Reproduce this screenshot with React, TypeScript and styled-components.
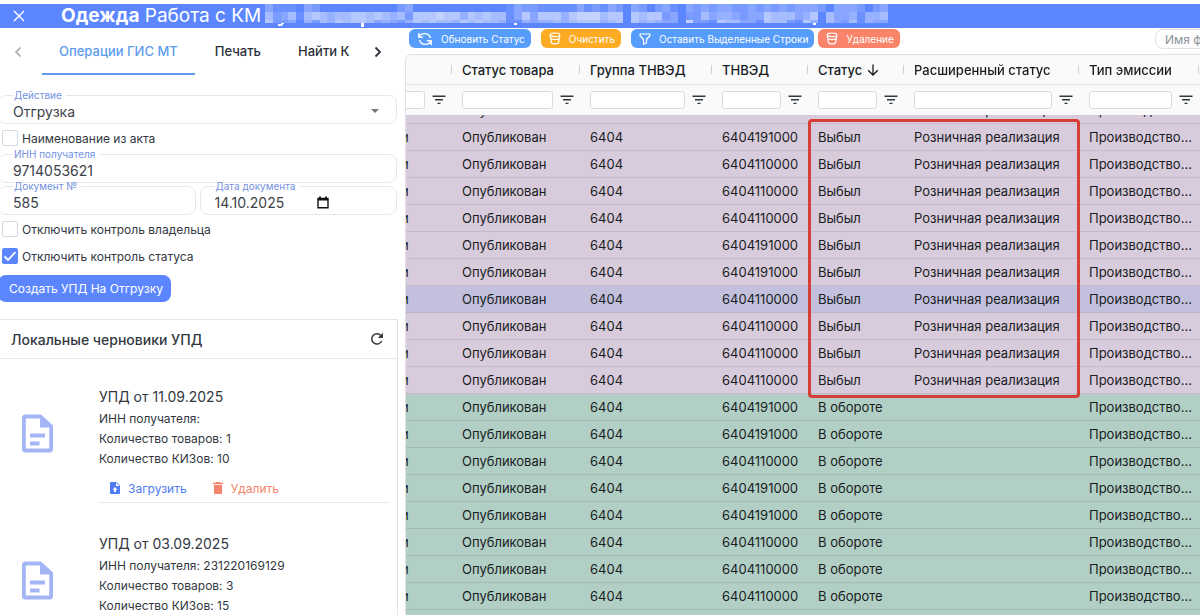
import React, { useLayoutEffect, useRef } from 'react';
import styled, { createGlobalStyle } from 'styled-components';

const GlobalStyle = createGlobalStyle`
  *, *::before, *::after { box-sizing: border-box; }
  body {
    margin: 0;
    background: #fff;
    color: #33383f;
    font-family: Inter, "Liberation Sans", sans-serif;
    font-size: 13px;
  }
  button, input, select { font-family: inherit; color: inherit; }
`;

const Page = styled.div`
  display: flex;
  flex-direction: column;
  height: 100vh;
  padding-top: 4px;
  overflow: hidden;
`;

const TopBar = styled.header`
  display: flex;
  flex: none;
  align-items: center;
  height: 24px;
  padding-left: 12px;
  background: #5c86ff;
  color: #fff;
`;

const IconButton = styled.button`
  display: flex;
  flex: none;
  padding: 0;
  border: 0;
  background: none;
  cursor: pointer;
`;

const Title = styled.h1`
  flex: none;
  margin: 0 4px 0 35px;
  font-size: 19px;
  line-height: 24px;
  font-weight: 400;
  white-space: pre;
`;

const Body = styled.div`
  display: flex;
  flex: 1;
  min-height: 0;
`;

const Side = styled.aside`
  display: flex;
  flex: none;
  flex-direction: column;
  width: 398px;
  overflow: hidden;
`;

const Tabs = styled.nav`
  display: flex;
  flex: none;
  align-items: center;
  height: 47px;
  padding: 0 14px 0 12px;
`;

const TabList = styled.div`
  display: flex;
  flex: 1;
  gap: 3px;
  margin: 0 12px 0 18px;
  overflow: hidden;
`;

const Tab = styled.button<{ $active?: boolean }>`
  height: 47px;
  padding: 0 17px;
  border: 0;
  border-bottom: 2px solid ${(p) => (p.$active ? '#5d9cec' : 'transparent')};
  background: none;
  color: ${(p) => (p.$active ? '#5d9cec' : '#2c3138')};
  font-size: 13px;
  font-weight: 500;
  white-space: nowrap;
`;

const Form = styled.form`
  display: flex;
  flex: none;
  flex-direction: column;
  gap: 1px;
  margin-left: -2px;
  padding: 14px 1px 0 0;
`;

const FieldRow = styled.div<{ $tight?: boolean }>`
  display: flex;
  gap: 4px;
  margin-top: ${(p) => (p.$tight ? -4 : 0)}px;
`;

const Field = styled.fieldset`
  flex: 1 1 0;
  min-width: 0;
  height: 35px;
  margin: 0;
  padding: 0 16px 0 14px;
  border: 1px solid #e4e8ee;
  border-radius: 8px;
`;

const Legend = styled.legend`
  height: 12px;
  padding: 0 4px 0 1px;
  color: #7391e0;
  font-size: 10px;
  line-height: 12px;
`;

const TextInput = styled.input`
  display: block;
  width: 100%;
  height: 20px;
  padding: 0;
  border: 0;
  outline: 0;
  background: none;
  color: #3c4249;
  font-size: 14px;
`;

const InputRow = styled.div`
  display: flex;
  align-items: center;
`;

const Select = styled.select`
  flex: 1;
  height: 20px;
  padding: 0;
  border: 0;
  appearance: none;
  background: none;
  color: #3c4249;
  font-size: 14px;
`;

const DateInput = styled(TextInput)`
  width: 102px;
`;

const Check = styled.label`
  display: flex;
  flex: none;
  align-items: center;
  gap: 4px;
  height: 26px;
  padding-left: 4px;
  font-size: 12px;
`;

const CheckBox = styled.input`
  flex: none;
  width: 16px;
  height: 16px;
  margin: 0;
  appearance: none;
  border: 1px solid #d5dae2;
  border-radius: 2px;
  background: #fff;
  &:checked {
    border-color: #5c86ff;
    background: #5c86ff;
  }
  &:not(:checked) + svg { display: none; }
`;

const CheckMark = styled.span`
  position: relative;
  display: flex;
  svg { position: absolute; inset: 0; pointer-events: none; }
`;

const Primary = styled.button`
  align-self: flex-start;
  height: 27px;
  margin-top: 5px;
  padding: 0 8px 0 11px;
  border: 0;
  border-radius: 8px;
  background: #5c86ff;
  color: #fff;
  font-size: 12px;
  font-weight: 400;
`;

const Card = styled.section`
  flex: 1;
  min-height: 0;
  margin-top: 17px;
  overflow: hidden;
  border-top: 1px solid #e6e6e6;
  border-right: 1px solid #e2e2e2;
`;

const CardHead = styled.div`
  display: flex;
  align-items: center;
  justify-content: space-between;
  height: 39px;
  padding: 0 13px 0 11px;
  border-bottom: 1px solid #e6e6e6;
`;

const CardTitle = styled.h2`
  margin: 0;
  font-size: 14px;
  font-weight: 500;
`;

const Draft = styled.article`
  display: flex;
  padding: 26px 8px 3px 18px;
`;

const DraftIcon = styled.div`
  flex: none;
  width: 81px;
  padding-top: 26px;
`;

const DraftText = styled.div`
  flex: 1;
  height: 118px;
  border-bottom: 1px solid #e6e6e6;
`;

const DraftTitle = styled.h3`
  margin: 0;
  font-size: 14px;
  line-height: 24px;
  font-weight: 400;
`;

const DraftLine = styled.p`
  margin: 0;
  font-size: 12px;
  line-height: 20px;
`;

const DraftActions = styled.div`
  display: flex;
  gap: 25px;
  margin-top: 7px;
  padding-left: 10px;
`;

const LinkButton = styled.button<{ $color: string }>`
  display: flex;
  align-items: center;
  gap: 7px;
  height: 24px;
  padding: 0;
  border: 0;
  background: none;
  color: ${(p) => p.$color};
  font-size: 12px;
`;

const Main = styled.main`
  display: flex;
  flex: 1;
  flex-direction: column;
  min-width: 0;
  margin-left: 7px;
`;

const Toolbar = styled.div`
  display: flex;
  flex: none;
  height: 26px;
  padding: 1px 0 0 4px;
  overflow: hidden;
`;

const ToolButton = styled.button<{ $bg: string; $gap?: number }>`
  display: flex;
  flex: none;
  align-items: center;
  gap: 8px;
  height: 19px;
  margin-right: ${(p) => p.$gap ?? 10}px;
  padding: 0 6px 0 8px;
  border: 0;
  border-radius: 6px;
  background: ${(p) => p.$bg};
  color: #fff;
  font-size: 10px;
  font-weight: 400;
  white-space: nowrap;
`;

const FileName = styled.input`
  flex: none;
  width: 160px;
  height: 20px;
  margin: 0 -115px 0 auto;
  padding: 0 9px;
  border: 1px solid #dfe3e8;
  border-radius: 8px;
  font-size: 12px;
  &::placeholder { color: #8d9299; opacity: 1; }
`;

const Grid = styled.div`
  position: relative;
  flex: 1;
  min-height: 0;
  border-top: 1px solid #dfe0e2;
  border-left: 1px solid #dfe0e2;
  border-top-left-radius: 6px;
  overflow: hidden;
`;

const Scroller = styled.div`
  width: 100%;
  height: 100%;
  overflow: auto;
  scrollbar-width: none;
`;

const Table = styled.table`
  width: 100%;
  min-width: 860px;
  table-layout: fixed;
  border-collapse: separate;
  border-spacing: 0;
  color: #181d1f;
  font-size: 13px;
`;

const Head = styled.thead`
  position: sticky;
  top: 0;
  z-index: 1;
`;

const HeadCell = styled.th`
  height: 30px;
  padding: 0;
  border-bottom: 1px solid #dfe0e2;
  background: #fafafa;
  font-weight: 500;
  text-align: left;
`;

const HeadInner = styled.div`
  display: flex;
  align-items: center;
  justify-content: space-between;
  height: 29px;
  padding-left: 10px;
  &::after {
    content: '';
    width: 1px;
    height: 9px;
    background: #cfd1d4;
  }
`;

const HeadLabel = styled.span`
  display: flex;
  align-items: center;
  gap: 5px;
  white-space: nowrap;
`;

const FilterCell = styled.td`
  height: 30px;
  padding: 0;
  background: #fafafa;
`;

const Filter = styled.div<{ $flush?: boolean }>`
  display: flex;
  align-items: center;
  gap: 7px;
  padding: 0 6px 0 ${(p) => (p.$flush ? 0 : 10)}px;
`;

const FilterInput = styled.input`
  flex: 1;
  min-width: 0;
  height: 18px;
  padding: 0 4px;
  border: 1px solid #d9dbde;
  border-radius: 3px;
  background: #fff;
`;

type Tone = 'lilac' | 'selected' | 'green';
const toneBg: Record<Tone, string> = { lilac: '#d8cbdb', selected: '#c2c0dc', green: '#b2cfc5' };
const toneLine: Record<Tone, string> = { lilac: '#c6bac9', selected: '#bdb6cb', green: '#a1bbb2' };

const Cell = styled.td<{ $tone: Tone; $flush?: boolean }>`
  height: 27px;
  padding: 0 0 0 ${(p) => (p.$flush ? 0 : 10)}px;
  border-bottom: 1px solid ${(p) => toneLine[p.$tone]};
  background: ${(p) => toneBg[p.$tone]};
  white-space: nowrap;
`;

const Marker = styled.div`
  position: absolute;
  top: 64px;
  left: 402px;
  z-index: 2;
  width: 272px;
  height: 279px;
  border: 3px solid #d63f38;
  border-radius: 4px;
  pointer-events: none;
`;

/* Pixelated client name: one digit per mosaic tile, giving its whiteness. */
const mosaic = [
  { y: 0, h: 8, tiles: '31110320000000000230000000000001322111113121320320231032323322323232333203332023200' },
  { y: 8, h: 8, tiles: '523515654556656545266676646565513636664677756606566230225344323365553460533414450' },
  { y: 16, h: 3, tiles: '622304254656653432465655465655411434454566645606454330722165533165521640532514330' },
];

const Mosaic = () => (
  <svg width="623" height="24" viewBox="0 0 623 24" aria-hidden="true" fill="#fff" shapeRendering="crispEdges">
    {mosaic.map((band) =>
      band.tiles.slice(0, 80).split('').map((d, i) => (
        <rect key={`${band.y}-${i}`} x={i * 7.79} y={band.y} width="7.79" height={band.h} opacity={Number(d) * 0.09} />
      )),
    )}
    <path d="M13 21.500q5 1 6-2.500h-2.500q-.500 1.500-3.500 1.200zM96 19h2.500v3.500H96zM249 19h2.500v2H249zM548 19h2.500v2H548z" />
  </svg>
);

const CloseIcon = () => (
  <svg width="14" height="14" viewBox="0 0 14 14" fill="none" stroke="#fff" strokeWidth="1.4">
    <path d="M2 2l10 10M12 2L2 12" />
  </svg>
);
const Chevron = ({ right }: { right?: boolean }) => (
  <svg width="12" height="12" viewBox="0 0 12 12" fill="none" stroke={right ? '#2c3138' : '#b4b6b9'} strokeWidth="1.8">
    <path d={right ? 'M3.500 1.500L8 6l-4.500 4.500' : 'M8.500 1.500L4 6l4.500 4.500'} />
  </svg>
);
const FilterIcon = () => (
  <svg width="14" height="10" viewBox="0 0 14 10" stroke="#33383c" strokeWidth="1.4">
    <path d="M.5 1.200h13M3 4.800h8M5.500 8.400h3" />
  </svg>
);
const CalendarIcon = () => (
  <svg width="12" height="13" viewBox="0 0 12 13" fill="none" stroke="#111" strokeWidth="1.400">
    <path d="M1 2.500h10v9.300H1z" />
    <path d="M1 3.500h10M3 .500v2M9 .500v2" strokeWidth="1.800" />
  </svg>
);
const DocIcon = () => (
  <svg width="38" height="46" viewBox="0 0 38 46" fill="#a3b5f5">
    <path fillRule="evenodd" d="M7 3.500h16L35 14.500v23.500a3.500 3.500 0 0 1-3.500 3.500H7.500A3.500 3.500 0 0 1 4 38V7a3.500 3.500 0 0 1 3.500-3.500zM7.800 7.500v30h23.400V16.500H22V7.500z" />
    <path d="M12 22.500h15v4H12zM12 30.500h9.500v4H12z" />
  </svg>
);
const ReloadIcon = () => (
  <svg width="14" height="14" viewBox="0 0 14 14">
    <path d="M11.700 9A5.200 5.200 0 1 1 11 3.600" fill="none" stroke="#33383f" strokeWidth="1.500" />
    <path d="M13 .800v5.200H7.800z" fill="#33383f" />
  </svg>
);
const UploadIcon = () => (
  <svg width="12" height="14" viewBox="0 0 12 14">
    <path d="M2 1h5.500L11 4.500V12a1 1 0 0 1-1 1H2a1 1 0 0 1-1-1V2a1 1 0 0 1 1-1z" fill="#4f7bf5" />
    <path d="M7 1.500V5h3.500zM6 6l2.500 2.800H7V11H5V8.800H3.500z" fill="#fff" />
  </svg>
);
const TrashIcon = () => (
  <svg width="12" height="14" viewBox="0 0 12 14" fill="#f5846b">
    <path d="M4 1h4l.600.800H11v1.400H1V1.800h2.400zM2 4h8v8a1 1 0 0 1-1 1H3a1 1 0 0 1-1-1z" />
  </svg>
);
const SyncIcon = () => (
  <svg width="16" height="14" viewBox="0 0 16 14" fill="none" stroke="#fff" strokeWidth="1.400" strokeLinecap="round" strokeLinejoin="round">
    <path d="M1.800 1.500v3.700h3.700M2 5A6 5.500 0 0 1 13.300 5.500M14.200 12.500V8.800h-3.700M14 9A6 5.500 0 0 1 2.700 8.500" />
  </svg>
);
const BucketIcon = () => (
  <svg width="12" height="13" viewBox="0 0 12 13" fill="none" stroke="#fff" strokeWidth="1.200">
    <ellipse cx="6" cy="2.800" rx="4.800" ry="1.800" />
    <path d="M1.200 3l1.300 8c1 1.200 6 1.200 7 0l1.300-8M1.800 6.500c2 1.400 6.400 1.400 8.400 0" />
  </svg>
);
const FunnelIcon = () => (
  <svg width="12" height="12" viewBox="0 0 12 12" fill="none" stroke="#fff" strokeWidth="1.200" strokeLinejoin="round">
    <path d="M1 1h10v1.500L7.500 6.500V10L4.500 11.300V6.500L1 2.500z" />
  </svg>
);

const drafts = [
  { date: '11.09.2025', inn: '', goods: 1, codes: 10 },
  { date: '03.09.2025', inn: '231220169129', goods: 3, codes: 15 },
];

const columns = [
  { label: 'Статус товара', width: 128 },
  { label: 'Группа ТНВЭД', width: 132 },
  { label: 'ТНВЭД', width: 96 },
  { label: 'Статус', width: 96, sorted: true },
  { label: 'Расширенный статус', width: 175 },
  { label: 'Тип эмиссии', width: 120 },
];

const outCodes = ['640320003...', '6404191000', '6404110000', '6404110000', '6404110000', '6404191000', '6404191000', '6404110000', '6404110000', '6404110000', '6404110000'];
const inCodes = ['6404191000', '6404191000', '6404110000', '6404191000', '6404191000', '6404110000', '6404110000', '6404110000', '6404110000'];
const rows = [
  ...outCodes.map((code, i) => ({ code, tone: (i === 7 ? 'selected' : 'lilac') as Tone, status: 'Выбыл', ext: 'Розничная реализация' })),
  ...inCodes.map((code) => ({ code, tone: 'green' as Tone, status: 'В обороте', ext: '' })),
];

export default function App() {
  const scroller = useRef<HTMLDivElement>(null);
  useLayoutEffect(() => {
    scroller.current?.scrollTo(5, 18);
  }, []);

  return (
    <Page>
      <GlobalStyle />
      <TopBar>
        <IconButton aria-label="Закрыть"><CloseIcon /></IconButton>
        <Title><b>Одежда</b> Работа с КМ</Title>
        <Mosaic />
      </TopBar>
      <Body>
        <Side>
          <Tabs>
            <IconButton aria-label="Назад"><Chevron /></IconButton>
            <TabList>
              <Tab $active>Операции ГИС МТ</Tab>
              <Tab>Печать</Tab>
              <Tab>Найти К</Tab>
            </TabList>
            <IconButton aria-label="Вперёд"><Chevron right /></IconButton>
          </Tabs>
          <Form onSubmit={(e) => e.preventDefault()}>
            <FieldRow>
              <Field>
                <Legend><label htmlFor="action">Действие</label></Legend>
                <InputRow>
                  <Select id="action"><option>Отгрузка</option></Select>
                  <svg width="10" height="6" viewBox="0 0 10 6"><path d="M1 1h8L5 5z" fill="#777" /></svg>
                </InputRow>
              </Field>
            </FieldRow>
            <Check><CheckBox type="checkbox" />Наименование из акта</Check>
            <FieldRow $tight>
              <Field>
                <Legend><label htmlFor="inn">ИНН получателя</label></Legend>
                <TextInput id="inn" defaultValue="9714053621" />
              </Field>
            </FieldRow>
            <FieldRow $tight>
              <Field>
                <Legend><label htmlFor="num">Документ №</label></Legend>
                <TextInput id="num" defaultValue="585" />
              </Field>
              <Field>
                <Legend><label htmlFor="date">Дата документа</label></Legend>
                <InputRow>
                  <DateInput id="date" defaultValue="14.10.2025" />
                  <CalendarIcon />
                </InputRow>
              </Field>
            </FieldRow>
            <Check><CheckBox type="checkbox" />Отключить контроль владельца</Check>
            <Check>
              <CheckMark>
                <CheckBox type="checkbox" defaultChecked />
                <svg width="16" height="16" viewBox="0 0 16 16" fill="none" stroke="#fff" strokeWidth="1.800">
                  <path d="M2.500 8.500l3.500 3.500 7.500-8" />
                </svg>
              </CheckMark>
              Отключить контроль статуса
            </Check>
            <Primary>Создать УПД На Отгрузку</Primary>
          </Form>
          <Card>
            <CardHead>
              <CardTitle>Локальные черновики УПД</CardTitle>
              <IconButton aria-label="Обновить"><ReloadIcon /></IconButton>
            </CardHead>
            {drafts.map((d) => (
              <Draft key={d.date}>
                <DraftIcon><DocIcon /></DraftIcon>
                <DraftText>
                  <DraftTitle>УПД от {d.date}</DraftTitle>
                  <DraftLine>ИНН получателя: {d.inn}</DraftLine>
                  <DraftLine>Количество товаров: {d.goods}</DraftLine>
                  <DraftLine>Количество КИЗов: {d.codes}</DraftLine>
                  <DraftActions>
                    <LinkButton $color="#4f7bf5"><UploadIcon />Загрузить</LinkButton>
                    <LinkButton $color="#f5846b"><TrashIcon />Удалить</LinkButton>
                  </DraftActions>
                </DraftText>
              </Draft>
            ))}
          </Card>
        </Side>
        <Main>
          <Toolbar>
            <ToolButton $bg="#559cfb"><SyncIcon />Обновить Статус</ToolButton>
            <ToolButton $bg="#fdab22"><BucketIcon />Очистить</ToolButton>
            <ToolButton $bg="#559cfb" $gap={4}><FunnelIcon />Оставить Выделенные Строки</ToolButton>
            <ToolButton $bg="#f9846a"><BucketIcon />Удаление</ToolButton>
            <FileName placeholder="Имя файла" aria-label="Имя файла" />
          </Toolbar>
          <Grid>
            <Scroller ref={scroller}>
              <Table>
                <colgroup>
                  <col width={51} />
                  {columns.map((c) => <col key={c.label} width={c.width} />)}
                  <col />
                </colgroup>
                <Head>
                  <tr>
                    <HeadCell><HeadInner><span /></HeadInner></HeadCell>
                    {columns.map((c) => (
                      <HeadCell key={c.label} scope="col">
                        <HeadInner>
                          <HeadLabel>
                            {c.label}
                            {c.sorted && (
                              <svg width="12" height="12" viewBox="0 0 12 12" fill="none" stroke="#181d1f" strokeWidth="1.300">
                                <path d="M6 .500v10.500M1.200 6.200L6 11l4.800-4.800" />
                              </svg>
                            )}
                          </HeadLabel>
                        </HeadInner>
                      </HeadCell>
                    ))}
                    <HeadCell />
                  </tr>
                  <tr>
                    <FilterCell><Filter $flush><FilterInput aria-label="Фильтр" /><FilterIcon /></Filter></FilterCell>
                    {columns.map((c) => (
                      <FilterCell key={c.label}>
                        <Filter><FilterInput aria-label={c.label} /><FilterIcon /></Filter>
                      </FilterCell>
                    ))}
                    <FilterCell />
                  </tr>
                </Head>
                <tbody>
                  {rows.map((r, i) => (
                    <tr key={i}>
                      <Cell $tone={r.tone} $flush>и</Cell>
                      <Cell $tone={r.tone}>Опубликован</Cell>
                      <Cell $tone={r.tone}>{r.code.slice(0, 4)}</Cell>
                      <Cell $tone={r.tone}>{r.code}</Cell>
                      <Cell $tone={r.tone}>{r.status}</Cell>
                      <Cell $tone={r.tone}>{r.ext}</Cell>
                      <Cell $tone={r.tone}>Производство...</Cell>
                      <Cell $tone={r.tone} />
                    </tr>
                  ))}
                </tbody>
              </Table>
            </Scroller>
            <Marker />
          </Grid>
        </Main>
      </Body>
    </Page>
  );
}
